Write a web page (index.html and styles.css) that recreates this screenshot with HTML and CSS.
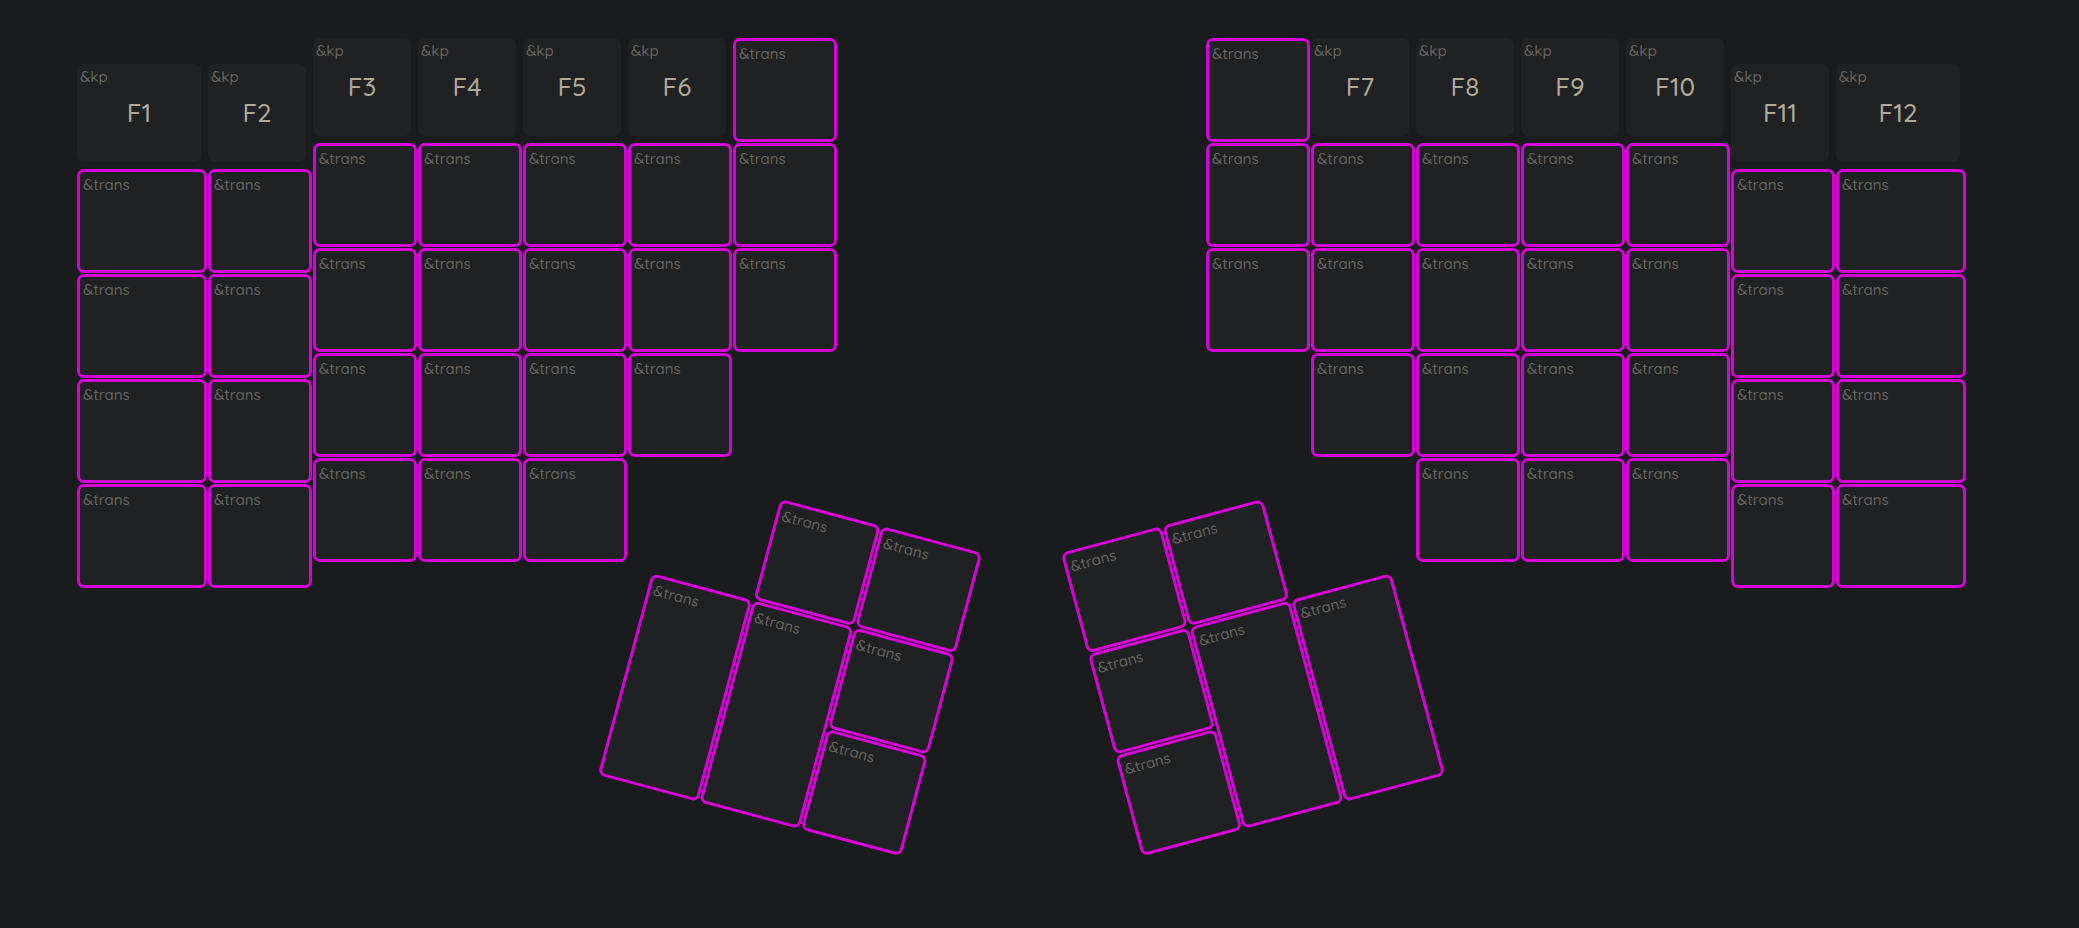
FILE: index.html
```html
<!DOCTYPE html>
<html lang="en">
<head>
<meta charset="utf-8">
<title>Keymap</title>
<link rel="stylesheet" href="styles.css">
</head>
<body>
<main class="board">
  <section class="half half-left" aria-label="Left half">
    <div class="columns">
      <div class="column wide low">
        <button class="key plain"><span class="kind">&amp;kp</span><span class="code">F1</span></button>
        <button class="key trans"><span class="kind">&amp;trans</span></button>
        <button class="key trans"><span class="kind">&amp;trans</span></button>
        <button class="key trans"><span class="kind">&amp;trans</span></button>
        <button class="key trans"><span class="kind">&amp;trans</span></button>
      </div>
      <div class="column low">
        <button class="key plain"><span class="kind">&amp;kp</span><span class="code">F2</span></button>
        <button class="key trans"><span class="kind">&amp;trans</span></button>
        <button class="key trans"><span class="kind">&amp;trans</span></button>
        <button class="key trans"><span class="kind">&amp;trans</span></button>
        <button class="key trans"><span class="kind">&amp;trans</span></button>
      </div>
      <div class="column">
        <button class="key plain"><span class="kind">&amp;kp</span><span class="code">F3</span></button>
        <button class="key trans"><span class="kind">&amp;trans</span></button>
        <button class="key trans"><span class="kind">&amp;trans</span></button>
        <button class="key trans"><span class="kind">&amp;trans</span></button>
        <button class="key trans"><span class="kind">&amp;trans</span></button>
      </div>
      <div class="column">
        <button class="key plain"><span class="kind">&amp;kp</span><span class="code">F4</span></button>
        <button class="key trans"><span class="kind">&amp;trans</span></button>
        <button class="key trans"><span class="kind">&amp;trans</span></button>
        <button class="key trans"><span class="kind">&amp;trans</span></button>
        <button class="key trans"><span class="kind">&amp;trans</span></button>
      </div>
      <div class="column">
        <button class="key plain"><span class="kind">&amp;kp</span><span class="code">F5</span></button>
        <button class="key trans"><span class="kind">&amp;trans</span></button>
        <button class="key trans"><span class="kind">&amp;trans</span></button>
        <button class="key trans"><span class="kind">&amp;trans</span></button>
        <button class="key trans"><span class="kind">&amp;trans</span></button>
      </div>
      <div class="column">
        <button class="key plain"><span class="kind">&amp;kp</span><span class="code">F6</span></button>
        <button class="key trans"><span class="kind">&amp;trans</span></button>
        <button class="key trans"><span class="kind">&amp;trans</span></button>
        <button class="key trans"><span class="kind">&amp;trans</span></button>
      </div>
      <div class="column">
        <button class="key trans"><span class="kind">&amp;trans</span></button>
        <button class="key trans"><span class="kind">&amp;trans</span></button>
        <button class="key trans"><span class="kind">&amp;trans</span></button>
      </div>
    </div>
    <div class="thumbs">
      <button class="key trans middle"><span class="kind">&amp;trans</span></button>
      <button class="key trans inner"><span class="kind">&amp;trans</span></button>
      <button class="key trans outer tall"><span class="kind">&amp;trans</span></button>
      <button class="key trans middle tall"><span class="kind">&amp;trans</span></button>
      <button class="key trans inner"><span class="kind">&amp;trans</span></button>
      <button class="key trans inner"><span class="kind">&amp;trans</span></button>
    </div>
  </section>

  <section class="half half-right" aria-label="Right half">
    <div class="columns">
      <div class="column">
        <button class="key trans"><span class="kind">&amp;trans</span></button>
        <button class="key trans"><span class="kind">&amp;trans</span></button>
        <button class="key trans"><span class="kind">&amp;trans</span></button>
      </div>
      <div class="column">
        <button class="key plain"><span class="kind">&amp;kp</span><span class="code">F7</span></button>
        <button class="key trans"><span class="kind">&amp;trans</span></button>
        <button class="key trans"><span class="kind">&amp;trans</span></button>
        <button class="key trans"><span class="kind">&amp;trans</span></button>
      </div>
      <div class="column">
        <button class="key plain"><span class="kind">&amp;kp</span><span class="code">F8</span></button>
        <button class="key trans"><span class="kind">&amp;trans</span></button>
        <button class="key trans"><span class="kind">&amp;trans</span></button>
        <button class="key trans"><span class="kind">&amp;trans</span></button>
        <button class="key trans"><span class="kind">&amp;trans</span></button>
      </div>
      <div class="column">
        <button class="key plain"><span class="kind">&amp;kp</span><span class="code">F9</span></button>
        <button class="key trans"><span class="kind">&amp;trans</span></button>
        <button class="key trans"><span class="kind">&amp;trans</span></button>
        <button class="key trans"><span class="kind">&amp;trans</span></button>
        <button class="key trans"><span class="kind">&amp;trans</span></button>
      </div>
      <div class="column">
        <button class="key plain"><span class="kind">&amp;kp</span><span class="code">F10</span></button>
        <button class="key trans"><span class="kind">&amp;trans</span></button>
        <button class="key trans"><span class="kind">&amp;trans</span></button>
        <button class="key trans"><span class="kind">&amp;trans</span></button>
        <button class="key trans"><span class="kind">&amp;trans</span></button>
      </div>
      <div class="column low">
        <button class="key plain"><span class="kind">&amp;kp</span><span class="code">F11</span></button>
        <button class="key trans"><span class="kind">&amp;trans</span></button>
        <button class="key trans"><span class="kind">&amp;trans</span></button>
        <button class="key trans"><span class="kind">&amp;trans</span></button>
        <button class="key trans"><span class="kind">&amp;trans</span></button>
      </div>
      <div class="column wide low">
        <button class="key plain"><span class="kind">&amp;kp</span><span class="code">F12</span></button>
        <button class="key trans"><span class="kind">&amp;trans</span></button>
        <button class="key trans"><span class="kind">&amp;trans</span></button>
        <button class="key trans"><span class="kind">&amp;trans</span></button>
        <button class="key trans"><span class="kind">&amp;trans</span></button>
      </div>
    </div>
    <div class="thumbs">
      <button class="key trans inner"><span class="kind">&amp;trans</span></button>
      <button class="key trans middle"><span class="kind">&amp;trans</span></button>
      <button class="key trans inner"><span class="kind">&amp;trans</span></button>
      <button class="key trans middle tall"><span class="kind">&amp;trans</span></button>
      <button class="key trans outer tall"><span class="kind">&amp;trans</span></button>
      <button class="key trans inner"><span class="kind">&amp;trans</span></button>
    </div>
  </section>
</main>
</body>
</html>
```
FILE: styles.css
```css
:root {
  --key: 104px;
  --gap: 1px;
}

* {
  box-sizing: border-box;
}

body {
  margin: 0;
  background: #191b1c;
  font-family: Quicksand, Lato, "Open Sans", sans-serif;
  font-weight: 500;
}

.board {
  display: flex;
  justify-content: space-between;
  padding: 38px 113px 38px 77px;
}

.half {
  display: flex;
  flex-direction: column;
}

.columns {
  display: flex;
  align-items: flex-start;
  gap: var(--gap);
}

.column {
  display: flex;
  flex-direction: column;
  gap: var(--gap);
  width: var(--key);
}

.column.wide {
  width: 130px;
}

.column.low {
  padding-top: 26px;
}

.key {
  display: grid;
  min-height: var(--key);
  padding: 0 3px;
  border: 0;
  border-radius: 7px;
  background: #1f2122;
  color: #b0a898;
  font-family: inherit;
  font-weight: inherit;
  text-align: left;
}

.key.trans {
  border: 3px solid #d800d8;
}

.key.plain {
  min-height: 98px;
  margin: 0 6px 6px 0;
}

.kind,
.code {
  grid-area: 1 / 1;
}

.kind {
  place-self: start;
  color: #686560;
  font-size: 15px;
  line-height: 26px;
}

.code {
  place-self: center;
  font-size: 26px;
  line-height: 32px;
}

.thumbs {
  display: grid;
  grid-template-columns: repeat(3, var(--key));
  grid-template-rows: repeat(3, var(--key));
  gap: var(--gap);
  margin-top: -81px;
}

.half-left .thumbs {
  align-self: flex-end;
  margin-right: -110px;
  transform: rotate(15deg);
}

.half-right .thumbs {
  align-self: flex-start;
  margin-left: -110px;
  transform: rotate(-15deg);
}

.middle {
  grid-column: 2;
}

.half-left .outer,
.half-right .inner {
  grid-column: 1;
}

.half-left .inner,
.half-right .outer {
  grid-column: 3;
}

.tall {
  grid-row: 2 / span 2;
}
```
